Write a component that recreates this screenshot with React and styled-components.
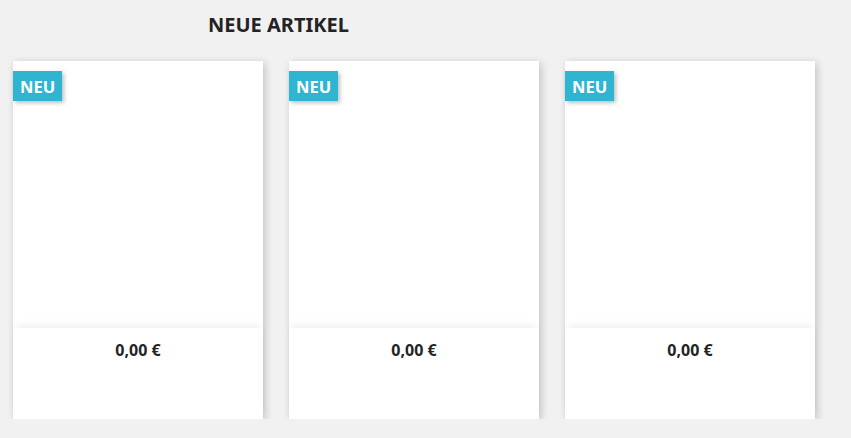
import React from "react";
import styled, { createGlobalStyle } from "styled-components";

const GlobalStyle = createGlobalStyle`
  html, body {
    margin: 0;
    padding: 0;
    background: #f1f1f1;
    font-family: "Noto Sans", "Open Sans", sans-serif;
    color: #232323;
  }
`;

const Section = styled.section`
  padding: 13px 13px 0;
`;

const Title = styled.h2`
  width: 531px;
  margin: 0 0 24px;
  text-align: center;
  font-size: 20px;
  font-weight: 700;
  line-height: 24px;
  text-transform: uppercase;
  color: #232323;
`;

const Grid = styled.div`
  display: flex;
  gap: 26px;
`;

const Card = styled.article`
  position: relative;
  width: 250px;
  height: 358px;
  display: flex;
  flex-direction: column;
  background: #fff;
  box-shadow: 2px 2px 8px 0 rgba(0, 0, 0, 0.2);
`;

const Thumb = styled.div`
  height: 267px;
`;

const Description = styled.div`
  flex: 1;
  background: #fff;
  box-shadow: 0 -5px 8px -3px rgba(0, 0, 0, 0.08);
  text-align: center;
  padding-top: 11px;
`;

const Price = styled.span`
  font-size: 16px;
  font-weight: 700;
  color: #232323;
`;

const Flag = styled.span`
  position: absolute;
  left: 0;
  top: 10px;
  height: 30px;
  padding: 0 7px;
  display: flex;
  align-items: center;
  background: #2fb5d2;
  color: #fff;
  font-size: 16.5px;
  font-weight: 700;
  box-shadow: 2px 2px 4px 0 rgba(0, 0, 0, 0.25);
`;

const products = [1, 2, 3];

export default function App() {
  return (
    <>
      <GlobalStyle />
      <Section>
        <Title>Neue Artikel</Title>
        <Grid>
          {products.map((id) => (
            <Card key={id}>
              <Flag>NEU</Flag>
              <Thumb />
              <Description>
                <Price>0,00 €</Price>
              </Description>
            </Card>
          ))}
        </Grid>
      </Section>
    </>
  );
}
